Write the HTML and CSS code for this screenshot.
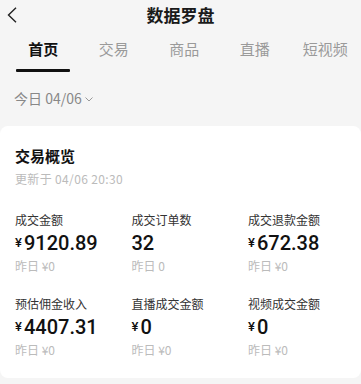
FILE: index.html
```html
<!DOCTYPE html>
<html lang="zh-CN">
<head>
<meta charset="utf-8">
<title>数据罗盘</title>
<link rel="stylesheet" href="styles.css">
</head>
<body>
<div class="page">
  <header class="topbar">
    <span class="back">
      <svg width="10" height="16" viewBox="0 0 10 16"><polyline points="9,0.8 1.5,8 9,15.2" fill="none" stroke="#222" stroke-width="1.4"/></svg>
    </span>
    <h1 class="title">数据罗盘</h1>
    <span></span>
  </header>
  <nav class="tabs">
    <div class="tab active"><span>首页</span><i class="bar"></i></div>
    <div class="tab"><span>交易</span></div>
    <div class="tab"><span>商品</span></div>
    <div class="tab"><span>直播</span></div>
    <div class="tab"><span>短视频</span></div>
  </nav>
  <div class="date">今日 04/06<svg class="caret" width="8" height="5" viewBox="0 0 8 5"><polyline points="0.5,0.5 4,4 7.5,0.5" fill="none" stroke="#999" stroke-width="1"/></svg></div>
  <section class="card">
    <h2 class="card-title">交易概览</h2>
    <div class="updated">更新于 04/06 20:30</div>
    <div class="metrics">
      <div class="metric"><div class="label">成交金额</div><div class="value"><span class="cur">¥</span>9120.89</div><div class="prev">昨日 ¥0</div></div>
      <div class="metric"><div class="label">成交订单数</div><div class="value">32</div><div class="prev">昨日 0</div></div>
      <div class="metric"><div class="label">成交退款金额</div><div class="value"><span class="cur">¥</span>672.38</div><div class="prev">昨日 ¥0</div></div>
      <div class="metric"><div class="label">预估佣金收入</div><div class="value"><span class="cur">¥</span>4407.31</div><div class="prev">昨日 ¥0</div></div>
      <div class="metric"><div class="label">直播成交金额</div><div class="value"><span class="cur">¥</span>0</div><div class="prev">昨日 ¥0</div></div>
      <div class="metric"><div class="label">视频成交金额</div><div class="value"><span class="cur">¥</span>0</div><div class="prev">昨日 ¥0</div></div>
    </div>
  </section>
</div>
</body>
</html>
```
FILE: styles.css
```css
* { box-sizing: border-box; }
html, body { margin: 0; padding: 0; }
body {
  background: #f5f5f5;
  font-family: "Noto Sans CJK SC", "Noto Sans", sans-serif;
  color: #222;
  width: 361px;
  height: 384px;
  overflow: hidden;
}
.topbar {
  height: 30px;
  display: grid;
  grid-template-columns: 40px 1fr 40px;
  align-items: center;
}
.back {
  display: flex;
  padding-left: 7px;
}
.title {
  margin: 0;
  text-align: center;
  font-size: 17px;
  line-height: 30px;
  font-weight: 600;
  color: #1a1a1a;
}
.tabs {
  display: grid;
  grid-template-columns: repeat(5, 70.5px);
  padding-left: 8px;
  height: 42px;
}
.tab {
  display: flex;
  flex-direction: column;
  align-items: center;
  padding-top: 9px;
  font-size: 15px;
  line-height: 20px;
  color: #9a9a9a;
}
.tab.active { color: #111; font-weight: 600; }
.bar {
  display: block;
  width: 54px;
  height: 3px;
  background: #111;
  margin-top: 10px;
  border-radius: 1px;
}
.date {
  display: flex;
  align-items: center;
  padding: 16px 14px 18px;
  font-size: 14px;
  line-height: 20px;
  color: #888;
  height: 54px;
}
.caret { margin-left: 3px; margin-top: 2px; }
.card {
  background: #fff;
  border-radius: 8px;
  padding: 19.5px 15px 19.5px;
  height: 252px;
}
.card-title {
  margin: 0;
  font-size: 15px;
  line-height: 20px;
  font-weight: 600;
  color: #111;
}
.updated {
  margin-top: 5.5px;
  font-size: 12px;
  line-height: 16px;
  letter-spacing: 0.35px;
  color: #bbb;
}
.metrics {
  margin-top: 23.5px;
  display: grid;
  grid-template-columns: repeat(3, 116.5px);
  row-gap: 20px;
}
.label {
  font-size: 12px;
  line-height: 18px;
  color: #333;
}
.value {
  font-family: Roboto, "Noto Sans", sans-serif;
  font-size: 20px;
  line-height: 28px;
  font-weight: 500;
  color: #111;
}
.cur {
  font-size: 13px;
  margin-right: 2px;
  vertical-align: 3px;
}
.prev {
  font-size: 12px;
  line-height: 18px;
  color: #bbb;
}
```
